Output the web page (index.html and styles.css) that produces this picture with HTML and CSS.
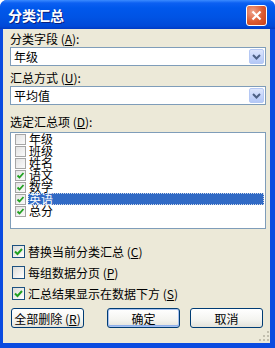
FILE: index.html
```html
<!DOCTYPE html>
<html lang="zh-CN">
<head>
    <meta charset="UTF-8">
    <title>分类汇总</title>
    <link rel="stylesheet" href="styles.css">
</head>
<body>
<div class="window">
    <div class="titlebar">
        <span class="title">分类汇总</span>
        <span class="close">
            <svg width="11" height="11" viewBox="0 0 11 11"><path d="M1.5 1.5 L9.5 9.5 M9.5 1.5 L1.5 9.5" stroke="#fff" stroke-width="2.2" fill="none"/></svg>
        </span>
    </div>
    <div class="client">
        <div class="label">分类字段 (<u>A</u>):</div>
        <div class="combo">
            <span class="combo-text">年级</span>
            <span class="combo-btn"><svg width="9" height="6" viewBox="0 0 9 6"><path d="M1 1 L4.5 4.5 L8 1" stroke="#4D6185" stroke-width="2" fill="none"/></svg></span>
        </div>

        <div class="label second">汇总方式 (<u>U</u>):</div>
        <div class="combo">
            <span class="combo-text">平均值</span>
            <span class="combo-btn"><svg width="9" height="6" viewBox="0 0 9 6"><path d="M1 1 L4.5 4.5 L8 1" stroke="#4D6185" stroke-width="2" fill="none"/></svg></span>
        </div>

        <div class="label third">选定汇总项 (<u>D</u>):</div>
        <div class="listbox">
            <div class="item"><span class="tick"></span><span class="item-text">年级</span></div>
            <div class="item"><span class="tick"></span><span class="item-text">班级</span></div>
            <div class="item"><span class="tick"></span><span class="item-text">姓名</span></div>
            <div class="item"><span class="tick on"><svg width="9" height="9" viewBox="0 0 9 9"><path d="M1.5 4.5 L3.5 6.5 L7.5 2" stroke="#21A121" stroke-width="1.8" fill="none"/></svg></span><span class="item-text">语文</span></div>
            <div class="item"><span class="tick on"><svg width="9" height="9" viewBox="0 0 9 9"><path d="M1.5 4.5 L3.5 6.5 L7.5 2" stroke="#21A121" stroke-width="1.8" fill="none"/></svg></span><span class="item-text">数学</span></div>
            <div class="item"><span class="tick on"><svg width="9" height="9" viewBox="0 0 9 9"><path d="M1.5 4.5 L3.5 6.5 L7.5 2" stroke="#21A121" stroke-width="1.8" fill="none"/></svg></span><span class="item-text selected">英语</span></div>
            <div class="item"><span class="tick on"><svg width="9" height="9" viewBox="0 0 9 9"><path d="M1.5 4.5 L3.5 6.5 L7.5 2" stroke="#21A121" stroke-width="1.8" fill="none"/></svg></span><span class="item-text">总分</span></div>
        </div>

        <div class="options">
            <div class="option"><span class="box"><svg width="11" height="11" viewBox="0 0 11 11"><path d="M2 5.5 L4.5 8 L9 3" stroke="#21A121" stroke-width="2" fill="none"/></svg></span>替换当前分类汇总 (<u>C</u>)</div>
            <div class="option"><span class="box"></span>每组数据分页 (<u>P</u>)</div>
            <div class="option"><span class="box"><svg width="11" height="11" viewBox="0 0 11 11"><path d="M2 5.5 L4.5 8 L9 3" stroke="#21A121" stroke-width="2" fill="none"/></svg></span>汇总结果显示在数据下方 (<u>S</u>)</div>
        </div>

        <div class="buttons">
            <button class="btn">全部删除 (<u>R</u>)</button>
            <button class="btn default push">确定</button>
            <button class="btn">取消</button>
        </div>
        <svg class="grip" width="10" height="10" viewBox="0 0 10 10">
            <rect x="8" y="0" width="2" height="2" fill="#C2BFAE"/>
            <rect x="4" y="4" width="2" height="2" fill="#C2BFAE"/>
            <rect x="8" y="4" width="2" height="2" fill="#C2BFAE"/>
            <rect x="0" y="8" width="2" height="2" fill="#C2BFAE"/>
            <rect x="4" y="8" width="2" height="2" fill="#C2BFAE"/>
            <rect x="8" y="8" width="2" height="2" fill="#C2BFAE"/>
        </svg>
    </div>
</div>
</body>
</html>
```

FILE: styles.css
```css
body {
    margin: 0;
    font-family: "Noto Sans CJK SC", sans-serif;
    font-size: 12px;
    color: #000;
    background: #fff;
}
.window {
    width: 275px;
    height: 348px;
    box-sizing: border-box;
    background: #0A4BE0;
    border-radius: 7px 7px 0 0;
    padding: 0 5px 5px 3px;
    display: flex;
    flex-direction: column;
}
.titlebar {
    height: 29px;
    margin: 0 -5px 0 -3px;
    padding: 0 8px 0 8px;
    border-radius: 7px 7px 0 0;
    background: linear-gradient(#3B8BFF 0, #0C60F2 3px, #0058EC 8px, #0053E4 60%, #0049D8 90%, #003AC4 100%);
    display: flex;
    align-items: center;
    justify-content: space-between;
}
.title {
    color: #fff;
    font-weight: bold;
    font-size: 14px;
    text-shadow: 1px 1px #0A1F80;
    margin-top: 1px;
}
.close {
    width: 19px;
    height: 19px;
    margin-top: 2px;
    border: 1px solid #fff;
    border-radius: 3px;
    background: radial-gradient(circle at 30% 30%, #EFA38B, #DC5A30 55%, #C8401A);
    display: flex;
    align-items: center;
    justify-content: center;
}
.client {
    flex: 1;
    background: #ECE9D8;
    padding: 2px 4px 0 7px;
    position: relative;
}
.label {
    line-height: 15px;
    height: 15px;
    margin-bottom: 1px;
}
.label u, .option u, .btn u {
    text-decoration: underline;
}
.label.second {
    margin-top: 4px;
}
.label.third {
    margin-top: 9px;
    margin-bottom: 3px;
}
.combo {
    height: 19px;
    box-sizing: border-box;
    border: 1px solid #7F9DB9;
    background: #fff;
    display: flex;
    align-items: center;
    padding: 1px;
}
.combo-text {
    flex: 1;
    padding-left: 2px;
    line-height: 15px;
}
.combo-btn {
    width: 15px;
    height: 15px;
    box-sizing: border-box;
    border: 1px solid #B5C8F4;
    border-radius: 2px;
    background: linear-gradient(#DDE6FC, #C3D3FA 60%, #B4C8F6);
    display: flex;
    align-items: center;
    justify-content: center;
}
.listbox {
    height: 97px;
    box-sizing: border-box;
    border: 1px solid #7F9DB9;
    background: #fff;
    padding: 0 1px 0 4px;
}
.item {
    height: 12px;
    display: flex;
    align-items: center;
}
.tick {
    width: 11px;
    height: 11px;
    box-sizing: border-box;
    border: 1px solid #A5A5A5;
    background: linear-gradient(135deg, #E3E3E3, #FAFAFA);
    display: flex;
    align-items: center;
    justify-content: center;
    flex: none;
}
.item-text {
    margin-left: 2px;
    padding-left: 1px;
    line-height: 12px;
    height: 12px;
    flex: 1;
}
.item-text.selected {
    background: #316AC5;
    color: #fff;
    outline: 1px dotted #CFD8E6;
    outline-offset: -1px;
}
.options {
    margin-top: 12px;
}
.option {
    height: 21px;
    display: flex;
    align-items: center;
}
.box {
    width: 13px;
    height: 13px;
    box-sizing: border-box;
    border: 1px solid #1C5180;
    background: linear-gradient(135deg, #DCDCD7, #FFFFFF);
    margin: 0 3px 0 2px;
    display: flex;
    align-items: center;
    justify-content: center;
}
.buttons {
    margin-top: 4px;
    padding-left: 1px;
    display: flex;
    gap: 10px;
}
.btn {
    width: 73px;
    height: 20px;
    padding: 0;
    font-family: inherit;
    font-size: 12px;
    color: #000;
    border: 1px solid #003C74;
    border-radius: 3px;
    background: linear-gradient(#FFFFFF, #F4F4F0 60%, #E3E2DA);
}
.btn.default {
    box-shadow: inset 0 0 0 1px #A6C1F0, inset 0 -1px 0 1px #8FB0EA;
}
.push {
    margin-left: 13px;
}
.grip {
    position: absolute;
    right: 1px;
    bottom: 2px;
}
```
